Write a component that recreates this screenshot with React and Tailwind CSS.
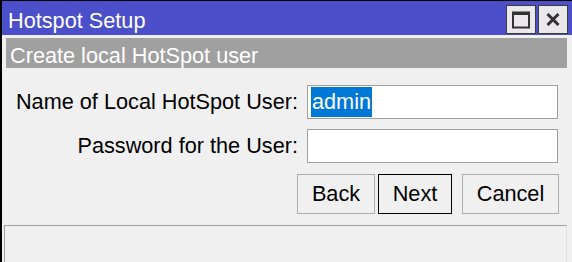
import React from "react";

const font = { fontFamily: '"Liberation Sans", Arial, sans-serif' };

const TitleButton = ({ children }) => (
  <div className="w-[30px] h-[29px] bg-[#ebe8eb] border border-[#3c3c3c] flex items-center justify-center">
    {children}
  </div>
);

const Field = ({ label, children }) => (
  <div className="flex items-center">
    <div className="w-[296px] text-right text-[#000] text-[21.7px] leading-[24px]">
      {label}
    </div>
    <div className="ml-[9px] w-[251px] h-[34px] bg-white border border-[#a0a0a0] flex items-center pl-[3px]">
      {children}
    </div>
  </div>
);

const Button = ({ children, active, className = "" }) => (
  <button
    className={`h-[40px] bg-[#f0f0f0] text-[21.7px] leading-[24px] text-black border ${
      active ? "border-black" : "border-[#adadad]"
    } ${className}`}
  >
    {children}
  </button>
);

const App = () => {
  return (
    <div
      className="w-[572px] h-[262px] overflow-hidden bg-[#f0f0f0] border-t border-l-2 border-black"
      style={font}
    >
      {/* Title bar */}
      <div className="h-[34px] bg-[#4b4fc9] flex items-start justify-between pl-[6px] pr-[4px]">
        <div className="pt-[8px] text-white text-[21.7px] leading-[24px]">
          Hotspot Setup
        </div>
        <div className="flex gap-[2px] pt-[4px]">
          <TitleButton>
            <svg width="18" height="18" viewBox="0 0 18 18">
              <rect x="1" y="1.5" width="16" height="15" fill="none" stroke="#333" strokeWidth="2" />
              <rect x="1" y="1" width="16" height="3" fill="#333" />
            </svg>
          </TitleButton>
          <TitleButton>
            <svg width="14" height="13" viewBox="0 0 14 13">
              <path d="M1.5 1 L12.5 12 M12.5 1 L1.5 12" stroke="#333" strokeWidth="3" />
            </svg>
          </TitleButton>
        </div>
      </div>

      {/* Section header */}
      <div className="mt-[3px] ml-[4px] w-[561px] h-[30px] bg-[#a0a0a0] pl-[4px] pt-[6px] text-white text-[21.7px] leading-[24px]">
        Create local HotSpot user
      </div>

      {/* Form */}
      <div className="mt-[17px] flex flex-col gap-[10px]">
        <Field label="Name of Local HotSpot User:">
          <span className="bg-[#0078d7] text-white text-[21.7px] leading-[30px] px-[1px]">
            admin
          </span>
        </Field>
        <Field label="Password for the User:" />
      </div>

      {/* Buttons */}
      <div className="mt-[11px] flex pl-[295px]">
        <Button className="w-[78px]">Back</Button>
        <Button active className="w-[74px] ml-[3px]">
          Next
        </Button>
        <Button className="w-[97px] ml-[10px]">Cancel</Button>
      </div>

      {/* Status panel */}
      <div className="mt-[11px] ml-[2px] w-[563px] h-[40px] border-t border-l border-[#a0a0a0] border-r border-r-[#e0e0e0]" />
    </div>
  );
};

export default App;
